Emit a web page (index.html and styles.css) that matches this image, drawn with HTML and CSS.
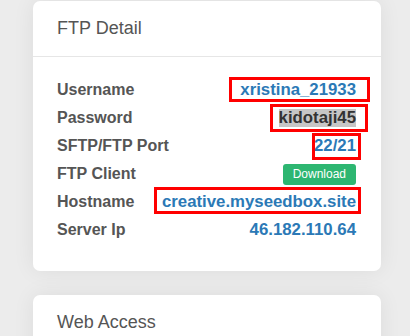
FILE: index.html
```html
<!DOCTYPE html>
<html>
<head>
  <title>Seedbox Details</title>
  <link rel="stylesheet" href="styles.css">
</head>
<body>
  <div class="page">
    <div class="card">
      <div class="card-header">FTP Detail</div>
      <div class="card-body">
        <div class="row">
          <span class="label">Username</span>
          <span class="value marked mark-user">xristina_21933</span>
        </div>
        <div class="row">
          <span class="label">Password</span>
          <span class="value selected marked mark-pass">kidotaji45</span>
        </div>
        <div class="row">
          <span class="label">SFTP/FTP Port</span>
          <span class="value marked mark-port">22/21</span>
        </div>
        <div class="row">
          <span class="label">FTP Client</span>
          <button class="btn-download">Download</button>
        </div>
        <div class="row">
          <span class="label">Hostname</span>
          <span class="value marked mark-host">creative.myseedbox.site</span>
        </div>
        <div class="row">
          <span class="label">Server Ip</span>
          <span class="value">46.182.110.64</span>
        </div>
      </div>
    </div>

    <div class="card">
      <div class="card-header">Web Access</div>
      <div class="card-body"></div>
    </div>
  </div>
</body>
</html>
```

FILE: styles.css
```css
body {
  margin: 0;
  background-color: #ececec;
  font-family: "Liberation Sans", Arial, sans-serif;
}
.page {
  display: flex;
  flex-direction: column;
  gap: 24px;
  width: 348px;
  padding: 1px 0 0 33px;
}
.card {
  background-color: #fff;
  border-radius: 7px;
  box-shadow: 0 0 22px rgba(0, 0, 0, 0.07);
}
.card-header {
  padding: 17px 24px 18px;
  font-size: 18px;
  line-height: 20px;
  color: #555;
  border-bottom: 1px solid #e6e6e6;
}
.card-body {
  display: flex;
  flex-direction: column;
  padding: 19px 25px 27px 24px;
}
.row {
  display: flex;
  justify-content: space-between;
  align-items: center;
  height: 28px;
}
.label {
  font-size: 16px;
  font-weight: bold;
  color: #555;
}
.value {
  position: relative;
  font-size: 16.8px;
  line-height: 20px;
  font-weight: bold;
  color: #2b79b6;
}
.selected {
  line-height: 18px;
  color: #333;
  background-color: #c6c6c6;
}
.btn-download {
  height: 21px;
  padding: 0 10px;
  border: none;
  border-radius: 3px;
  background-color: #2db671;
  color: #fff;
  font-family: "Liberation Sans", Arial, sans-serif;
  font-size: 12px;
}
.marked::after {
  content: "";
  position: absolute;
  border: 3px solid #f00;
}
.mark-user::after { left: -11px; right: -14px; top: -3px; bottom: -2px; }
.mark-pass::after { left: -9px; right: -12px; top: -5px; bottom: -5px; }
.mark-port::after { left: -2px; right: -5px; top: -3px; bottom: -4px; }
.mark-host::after { left: -8px; right: -5px; top: -5px; bottom: -2px; }
```
